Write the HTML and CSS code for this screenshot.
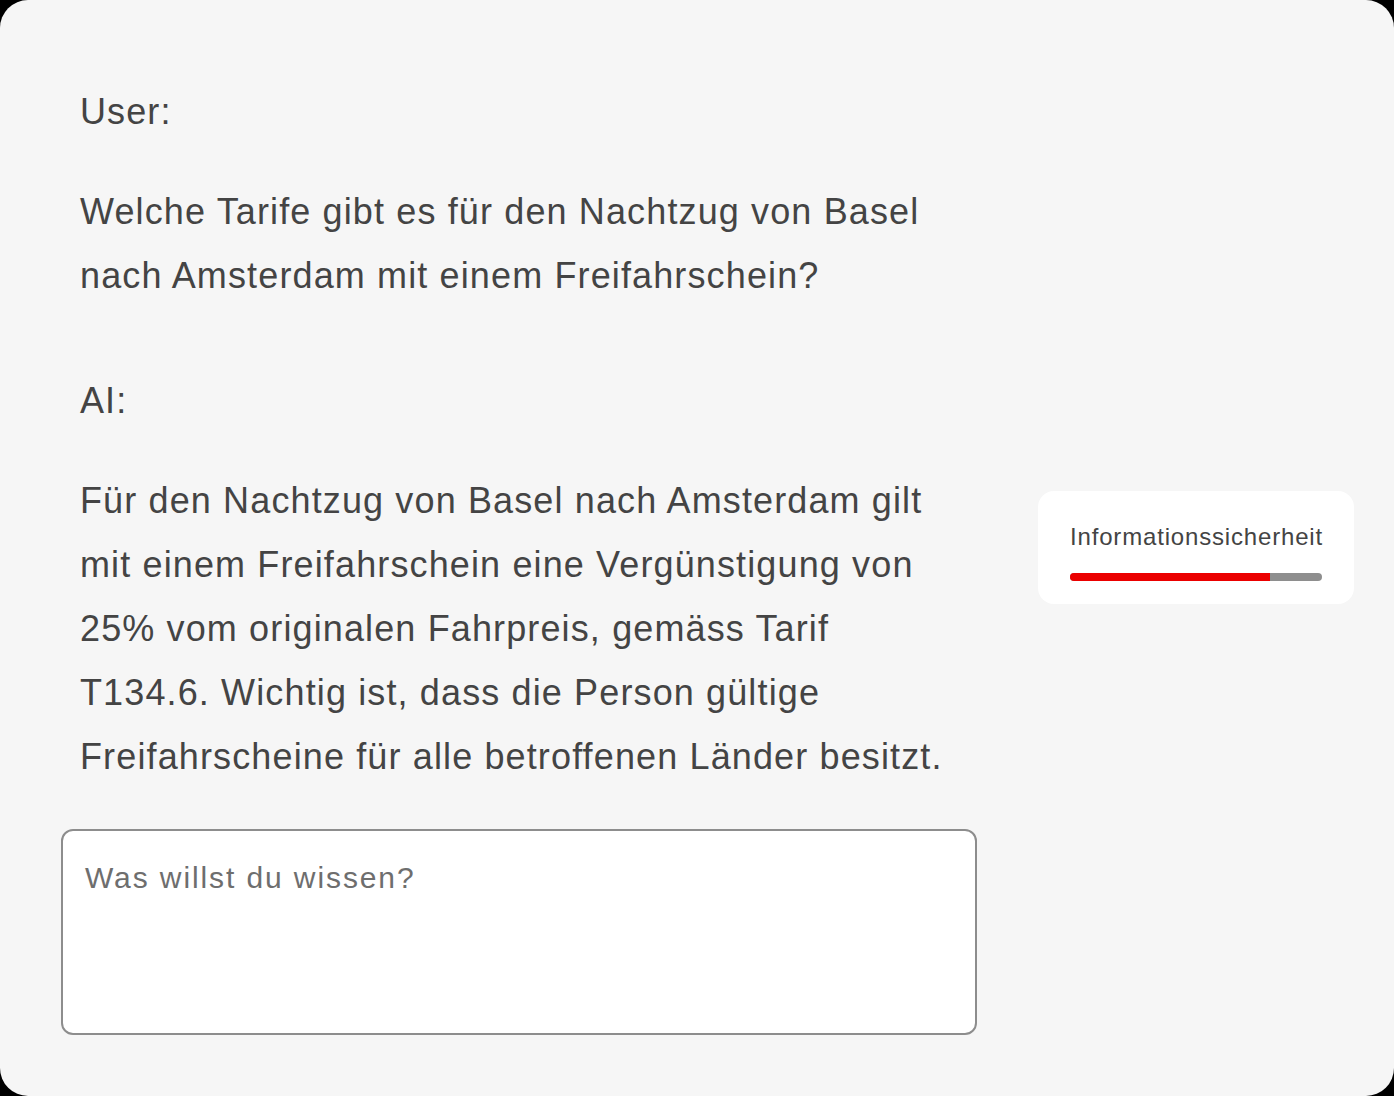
FILE: index.html
```html
<!DOCTYPE html>
<html lang="de">
<head>
<meta charset="utf-8">
<title>Chat</title>
<link rel="stylesheet" href="styles.css">
</head>
<body>
<div class="panel">
  <main class="chat">
    <section class="message">
      <div class="role">User:</div>
      <p class="text">Welche Tarife gibt es für den Nachtzug von Basel nach Amsterdam mit einem Freifahrschein?</p>
    </section>
    <section class="message">
      <div class="role">AI:</div>
      <p class="text">Für den Nachtzug von Basel nach Amsterdam gilt mit einem Freifahrschein eine Vergünstigung von 25% vom originalen Fahrpreis, gemäss Tarif T134.6. Wichtig ist, dass die Person gültige Freifahrscheine für alle betroffenen Länder besitzt.</p>
    </section>
    <textarea class="ask" placeholder="Was willst du wissen?"></textarea>
  </main>
  <aside class="side">
    <div class="card">
      <div class="card-label">Informationssicherheit</div>
      <div class="bar"><div class="bar-fill" style="width:79.4%"></div></div>
    </div>
  </aside>
</div>
</body>
</html>
```
FILE: styles.css
```css
html, body {
  margin: 0;
  padding: 0;
  background: #000;
}
body {
  width: 1394px;
  height: 1096px;
  font-family: "Liberation Sans", Arial, sans-serif;
  color: #444;
}
.panel {
  box-sizing: border-box;
  width: 1394px;
  height: 1096px;
  background: #f6f6f6;
  border-radius: 28px;
  display: grid;
  grid-template-columns: 916px 316px;
  column-gap: 61px;
  padding: 80px 40px 61px 61px;
}
.chat {
  display: flex;
  flex-direction: column;
}
.message {
  padding-left: 19px;
  margin-bottom: 61px;
}
.message:last-of-type {
  margin-bottom: 40px;
}
.role {
  font-size: 36px;
  line-height: 64px;
  letter-spacing: 1.1px;
  margin-bottom: 36px;
}
.text {
  margin: 0;
  font-size: 36px;
  line-height: 64px;
  letter-spacing: 1.13px;
  width: 870px;
}
.ask {
  box-sizing: border-box;
  width: 916px;
  height: 206px;
  border: 2px solid #8d8d8d;
  border-radius: 12px;
  background: #fff;
  padding: 29px 22px;
  font-family: "Liberation Sans", Arial, sans-serif;
  font-size: 30px;
  line-height: 36px;
  letter-spacing: 1.9px;
  color: #444;
  resize: none;
  outline: none;
}
.ask::placeholder {
  color: #6e6e6e;
  opacity: 1;
}
.side {
  padding-top: 411px;
}
.card {
  background: #fff;
  border-radius: 16px;
  padding: 31px 32px 23px;
}
.card-label {
  font-size: 24px;
  line-height: 30px;
  letter-spacing: 0.83px;
  color: #444;
  margin-bottom: 21px;
  white-space: nowrap;
}
.bar {
  height: 8px;
  background: #8e8e8e;
  border-radius: 4px;
  overflow: hidden;
}
.bar-fill {
  height: 100%;
  background: #eb0000;
}
```
